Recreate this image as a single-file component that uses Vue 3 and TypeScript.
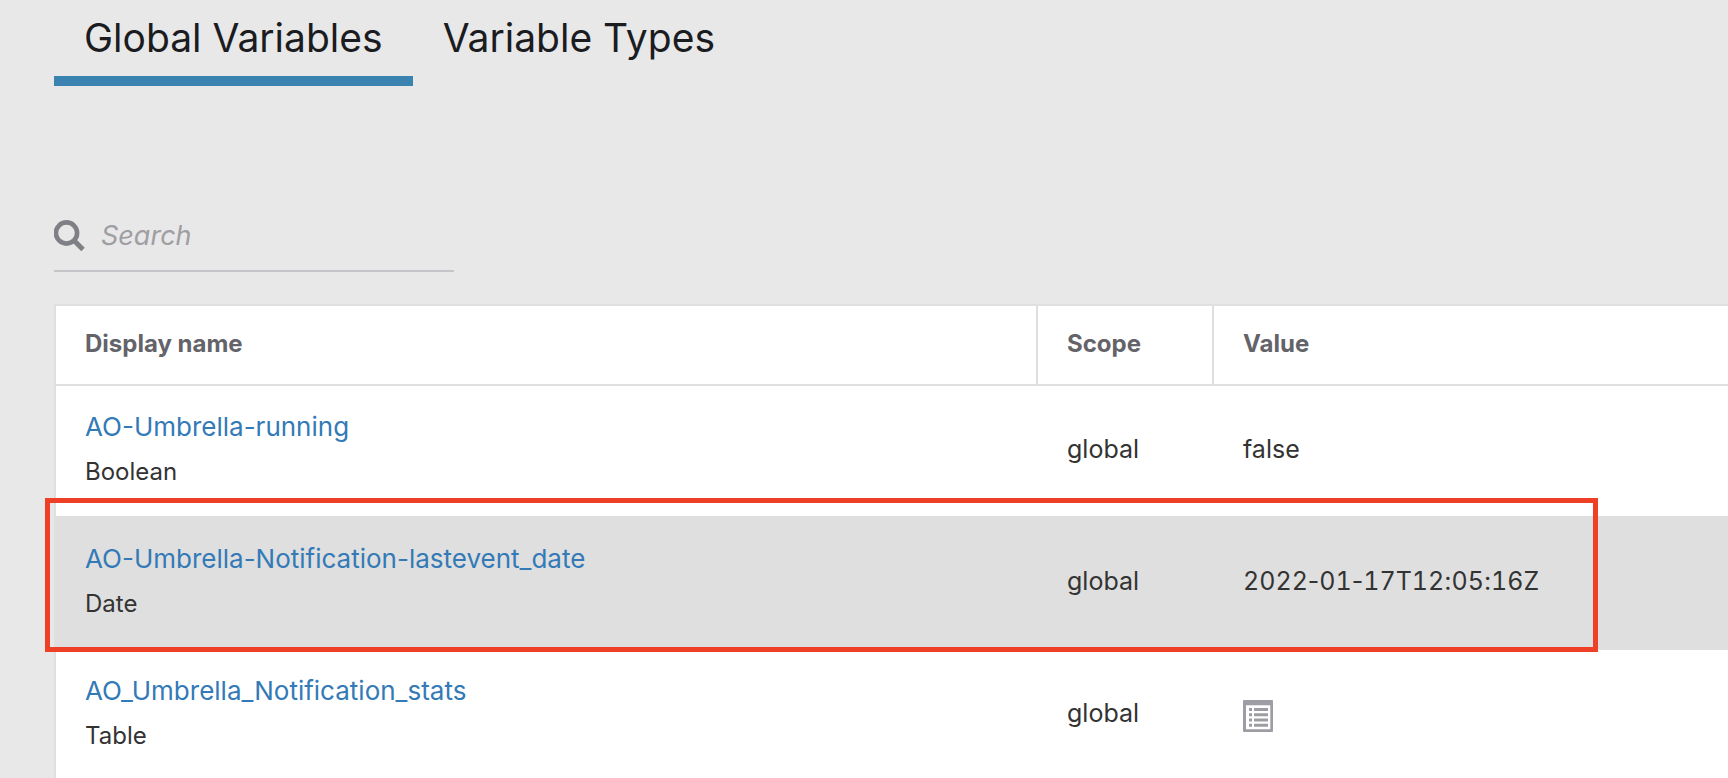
<script setup lang="ts">
import { computed, ref } from 'vue'

interface Variable {
  name: string
  type: string
  scope: string
  value: string | null
  highlighted?: boolean
}

const tabs = ['Global Variables', 'Variable Types']
const activeTab = ref(tabs[0])
const query = ref('')

const variables: Variable[] = [
  { name: 'AO-Umbrella-running', type: 'Boolean', scope: 'global', value: 'false' },
  {
    name: 'AO-Umbrella-Notification-lastevent_date',
    type: 'Date',
    scope: 'global',
    value: '2022-01-17T12:05:16Z',
    highlighted: true,
  },
  { name: 'AO_Umbrella_Notification_stats', type: 'Table', scope: 'global', value: null },
]

const visible = computed(() =>
  variables.filter((v) => v.name.toLowerCase().includes(query.value.toLowerCase())),
)

// Runs of digits are set in tabular figures; the separators keep their own width.
const runs = (text: string): string[] => text.match(/\d+|\D+/g) ?? []
const isNumber = (run: string): boolean => /^\d/.test(run)
</script>

<template>
  <main class="page">
    <nav class="tabs" role="tablist">
      <button
        v-for="tab in tabs"
        :key="tab"
        type="button"
        role="tab"
        class="tab"
        :class="{ active: tab === activeTab }"
        :aria-selected="tab === activeTab"
        @click="activeTab = tab"
      >
        {{ tab }}
      </button>
    </nav>

    <label class="search">
      <svg class="search-icon" viewBox="0 0 32 32" aria-hidden="true">
        <circle cx="12.5" cy="13" r="10.6" fill="none" stroke="#7f7f86" stroke-width="4.6" />
        <path d="M20 20.5 29 29.5" stroke="#7f7f86" stroke-width="5" />
      </svg>
      <input v-model="query" type="text" placeholder="Search" aria-label="Search" />
    </label>

    <table class="variables">
      <colgroup>
        <col />
        <col class="col-scope" />
        <col class="col-value" />
      </colgroup>
      <thead>
        <tr>
          <th scope="col">Display name</th>
          <th scope="col">Scope</th>
          <th scope="col">Value</th>
        </tr>
      </thead>
      <tbody>
        <tr v-for="v in visible" :key="v.name" :class="{ highlighted: v.highlighted }">
          <td>
            <a href="#" class="name">{{ v.name }}</a>
            <div class="type">{{ v.type }}</div>
          </td>
          <td>{{ v.scope }}</td>
          <td>
            <template v-if="v.value !== null">
              <span v-for="(run, i) in runs(v.value)" :key="i" :class="{ digits: isNumber(run) }">{{ run }}</span>
            </template>
            <button v-else type="button" class="open-table" aria-label="Open table">
              <svg viewBox="0 0 30 32" aria-hidden="true">
                <path
                  fill="#9d9da3"
                  fill-rule="evenodd"
                  d="M1 0H29Q30 0 30 1V31Q30 32 29 32H1Q0 32 0 31V1Q0 0 1 0ZM3 5.3V29.3H27.3V5.3Z"
                />
                <path
                  stroke="#9d9da3"
                  stroke-width="3"
                  d="M6 9.5H9M11 9.5H25M6 14.8H9M11 14.8H25M6 20H9M11 20H25M6 25.3H9M11 25.3H25"
                />
              </svg>
            </button>
          </td>
        </tr>
      </tbody>
    </table>
  </main>
</template>

<style>
body {
  background: #e8e8e8;
  overflow: hidden;
}
</style>

<style scoped>
.page {
  padding-left: 54px;
  font-family: Inter, "Liberation Sans", sans-serif;
  font-size: 25px;
  line-height: 32px;
  color: #333;
}

button {
  padding: 0;
  border: 0;
  background: none;
  font: inherit;
  cursor: pointer;
}

.tabs {
  display: flex;
}

.tab {
  padding: 14px 30px;
  border-bottom: 10px solid transparent;
  font-size: 39px;
  line-height: 48px;
  color: #1b1c1f;
}

.tab.active {
  border-bottom-color: #3a82b0;
}

.search {
  display: flex;
  align-items: center;
  gap: 15px;
  box-sizing: border-box;
  width: 400px;
  height: 70px;
  margin-top: 116px;
  border-bottom: 2px solid #c4c4c9;
}

.search-icon {
  flex: none;
  width: 32px;
  height: 32px;
}

.search input {
  flex: 1;
  min-width: 0;
  padding: 0;
  border: 0;
  outline: 0;
  background: none;
  font: italic 27px/36px Inter, "Liberation Sans", sans-serif;
  color: #333;
}

.search input::placeholder {
  color: #9e9ea3;
  opacity: 1;
}

.variables {
  width: 100%;
  margin-top: 32px;
  border: 2px solid #dfdfdf;
  border-right: 0;
  border-spacing: 0;
  table-layout: fixed;
  background: #fff;
}

.col-scope {
  width: 176px;
}

.col-value {
  width: 514px;
}

th,
td {
  box-sizing: border-box;
  padding: 0 29px 2px;
  border-bottom: 2px solid #dfdfdf;
  text-align: left;
}

th {
  height: 80px;
  border-right: 2px solid #dfdfdf;
  font-size: 24px;
  font-weight: 700;
  color: #636369;
}

th:last-child {
  border-right: 0;
}

td {
  height: 132px;
  padding-bottom: 4px;
}

.name {
  font-size: 26px;
  color: #337ab7;
  text-decoration: none;
}

.type {
  margin-top: 13px;
  font-size: 24px;
}

.digits {
  font-variant-numeric: tabular-nums;
}

.open-table {
  display: block;
  width: 30px;
  height: 32px;
  margin-top: 6px;
}

.open-table svg {
  display: block;
  width: 100%;
  height: 100%;
}

.highlighted {
  position: relative;
  background: #dfdfdf;
}

.highlighted td:first-child::after {
  content: "";
  position: absolute;
  inset: -20px 130px -2px -11px;
  border: 5px solid #ee4026;
}
</style>
